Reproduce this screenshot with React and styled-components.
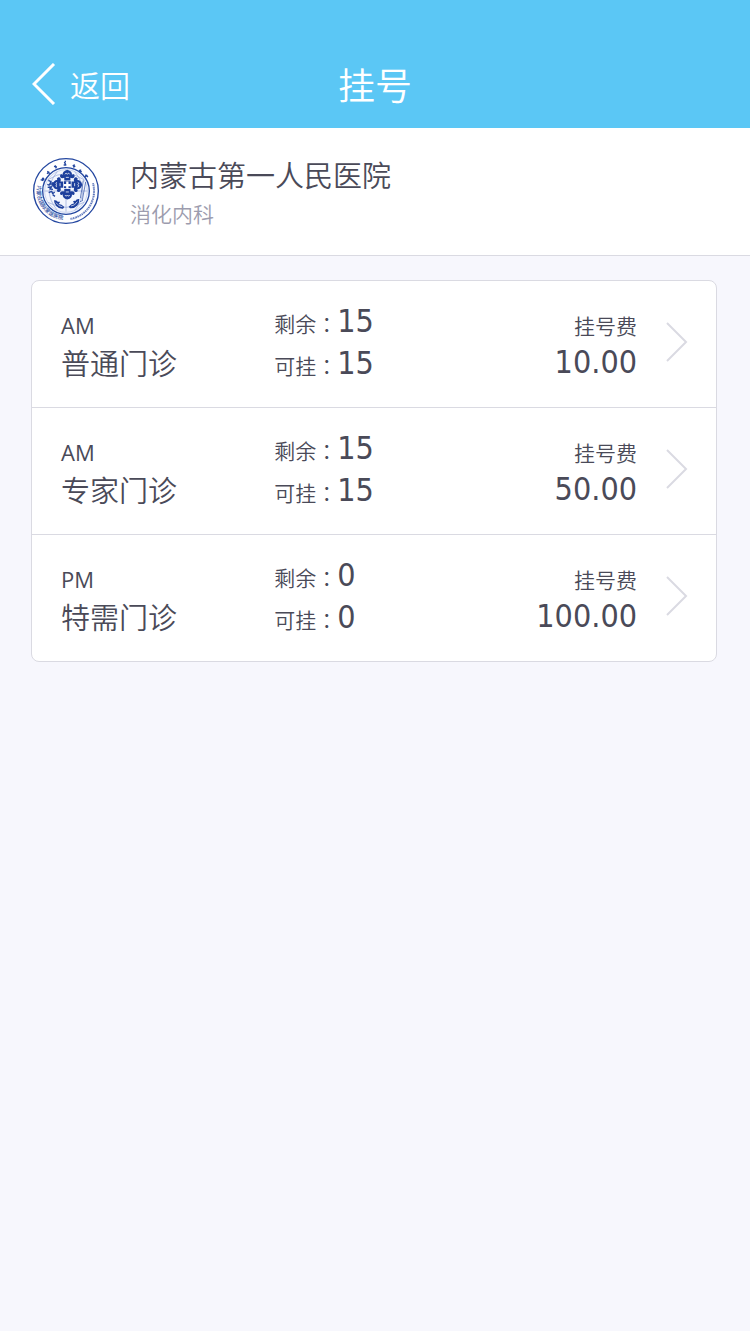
import React from "react";
import styled, { createGlobalStyle } from "styled-components";

const GlobalStyle = createGlobalStyle`
  *, *::before, *::after { box-sizing: border-box; }
  body {
    margin: 0;
    background: #f7f7fd;
    color: #4a4a58;
    font-family: "Noto Sans CJK SC", sans-serif;
    font-weight: 350;
  }
`;

const TopBar = styled.header`
  display: grid;
  grid-template-columns: 1fr auto 1fr;
  align-items: center;
  min-height: 128px;
  padding: 40px 32px 0;
  background: #5bc7f5;
  color: #fff;
`;

const BackLink = styled.a`
  display: flex;
  align-items: center;
  gap: 14px;
  justify-self: start;
  color: inherit;
  font-size: 30px;
  line-height: 44px;
  text-decoration: none;
`;

const PageTitle = styled.h1`
  margin: 0;
  font-size: 37px;
  font-weight: 350;
  line-height: 44px;
`;

const Hospital = styled.section`
  display: flex;
  align-items: center;
  gap: 30px;
  min-height: 128px;
  padding: 26px 32px 23px;
  background: #fff;
  border-bottom: 1px solid #dadae2;
`;

const SealImage = styled.svg`
  flex: none;
  margin-bottom: 4px;
`;

const HospitalName = styled.h2`
  margin: 0;
  font-size: 29px;
  font-weight: 350;
  line-height: 40px;
`;

const Department = styled.p`
  margin: 0;
  color: #9c9cae;
  font-size: 21px;
  line-height: 38px;
`;

const ClinicList = styled.ul`
  margin: 24px 33px 24px 31px;
  padding: 0;
  list-style: none;
  background: #fff;
  border: 1px solid #dadae2;
  border-radius: 8px;
`;

const ClinicItem = styled.li`
  & + & { border-top: 1px solid #dadae2; }
`;

const ClinicLink = styled.a`
  display: grid;
  grid-template-columns: 34% 1fr auto auto;
  align-items: center;
  min-height: 126px;
  padding: 0 28px 0 29px;
  color: inherit;
  text-decoration: none;
`;

const Column = styled.div`
  display: flex;
  flex-direction: column;
  text-align: ${(p) => p.$align || "left"};
`;

const Caption = styled.span`
  font-size: 21px;
  line-height: 36px;
`;

const Period = styled(Caption)`
  font-family: "Open Sans", "Noto Sans", sans-serif;
  font-size: 22px;
  font-weight: 400;
`;

const ClinicName = styled.span`
  font-size: 29px;
  line-height: 38px;
`;

const Quota = styled.span`
  font-size: 21px;
  line-height: 42px;
`;

const Colon = styled.span`
  font-family: "Noto Sans CJK TC", sans-serif;
`;

const Figure = styled.span`
  font-family: "DejaVu Sans Condensed", "Noto Sans CJK SC", sans-serif;
  font-size: 32px;
  font-weight: 400;
  line-height: 38px;
`;

const RowArrow = styled.svg`
  margin: 0 0 4px 29px;
`;

const clinics = [
  { period: "AM", name: "普通门诊", left: 15, open: 15, fee: "10.00" },
  { period: "AM", name: "专家门诊", left: 15, open: 15, fee: "50.00" },
  { period: "PM", name: "特需门诊", left: 0, open: 0, fee: "100.00" },
];

/* One arm of the cloud-pattern cross, pointing up from the centre. */
const CrossArm = ({ angle }) => (
  <g transform={`rotate(${angle} 124 103)`}>
    <path
      d="M116 92v-7c-7 3-12-1-11-6 1-4 6-4 7-1-1-7 3-11 12-14 9 3 13 7 12 14 1-3 6-3 7 1 1 5-4 9-11 6v7z"
      fill="#1d3f9c"
    />
    <path d="M118 76c1-4 5-3 6 0 1-3 5-4 6 0M120 84h8" fill="none" stroke="#fff" strokeWidth="2" />
  </g>
);

const Seal = () => (
  <SealImage width="68" height="68" viewBox="18 20 204 204" role="img" aria-label="医院院徽">
    <defs>
      <path id="seal-lower-arc" d="M35 103A86 86 0 0 0 118 208" />
    </defs>
    <circle cx="120" cy="122" r="97" fill="#fff" stroke="#2447a0" strokeWidth="4" />
    <circle cx="120" cy="122" r="70" fill="#f3f6fd" stroke="#2447a0" strokeWidth="4" />
    <circle cx="120" cy="122" r="64" fill="none" stroke="#7d95d2" strokeWidth="1" />
    <g fill="none" stroke="#91a5d8" strokeWidth="2">
      <path d="M66 88q54-36 108 0M56 122h128M66 156q54 30 108 0" />
      <path d="M94 64q-48 58 0 116M146 64q48 58 0 116M120 58v126" />
    </g>
    <g fill="none" stroke="#2447a0" strokeWidth="4">
      <path d="M48 83l7 5M44 88l8 3M53 82l-3 9M64 63l7 7M63 70l7-6M88 45l2 9M84 48l9 2M115 35l4 8M113 44h8M118 31v5M145 42l-2 10M140 45l8 4M165 58l-6 8M159 59l8 6M184 74l-8 6M178 73l8 7" />
    </g>
    <text fill="#2447a0" fontFamily="Noto Sans CJK SC, sans-serif" fontSize="16" fontWeight="500">
      <textPath href="#seal-lower-arc" startOffset="2">内蒙古国际蒙医医院</textPath>
    </text>
    <g fill="none" stroke="#5872b9">
      <path d="M201 99A85 85 0 0 1 132 206" strokeWidth="6" strokeDasharray="2 2 4 2 3 1" />
    </g>
    <g fill="none" stroke="#2447a0" strokeWidth="4" strokeLinejoin="round">
      <path d="M67 90l8 4-4 8 9-2-2 8M65 111l12-2-5 7 9 1M68 127l9-4 3 7 6-5M77 97l10 2M80 133l7 5M64 102l7 3" />
      <path d="M179 95l-10 54M172 90l-9 54M171 150l-9 4" strokeWidth="2" />
    </g>
    {/* The motif is enlarged about its own centre to fill the inner ring. */}
    <g transform="translate(124 103) scale(1.15) translate(-124 -103)">
      {[0, 90, 180, 270].map((a) => (
        <CrossArm key={a} angle={a} />
      ))}
      <path d="M115 94h18v18h-18z" fill="#1d3f9c" />
      <path d="M121 95h6v6h6v6h-6v6h-6v-6h-6v-6h6z" fill="#fff" />
    </g>
    <g fill="#1d3f9c">
      <path d="M84 150q8-2 12 5 4-3 6 1l-4 5q9 0 17 9l-4 5q-13 1-20-8-7-7-7-17z" />
      <path d="M160 146q-9-1-12 6-4-2-7 2l4 5q-9 1-17 10l4 5q13 1 21-8 8-8 7-20z" />
    </g>
    <path d="M90 157q8 12 19 12M154 154q-8 13-19 13" fill="none" stroke="#fff" strokeWidth="2" />
  </SealImage>
);

export default function App() {
  return (
    <>
      <GlobalStyle />
      <TopBar>
        <BackLink href="#back">
          <svg width="24" height="42" viewBox="0 0 24 42" fill="none" stroke="#fff" strokeWidth="3" aria-hidden="true">
            <path d="M22 1L2 21l20 20" />
          </svg>
          返回
        </BackLink>
        <PageTitle>挂号</PageTitle>
      </TopBar>
      <main>
        <Hospital>
          <Seal />
          <div>
            <HospitalName>内蒙古第一人民医院</HospitalName>
            <Department>消化内科</Department>
          </div>
        </Hospital>
        <ClinicList>
          {clinics.map((c, i) => (
            <ClinicItem key={c.name}>
              <ClinicLink href={`#clinic-${i + 1}`}>
                <Column>
                  <Period>{c.period}</Period>
                  <ClinicName>{c.name}</ClinicName>
                </Column>
                <Column>
                  <Quota>剩余<Colon>：</Colon><Figure>{c.left}</Figure></Quota>
                  <Quota>可挂<Colon>：</Colon><Figure>{c.open}</Figure></Quota>
                </Column>
                <Column $align="right">
                  <Caption>挂号费</Caption>
                  <Figure>{c.fee}</Figure>
                </Column>
                <RowArrow width="22" height="40" viewBox="0 0 22 40" fill="none" stroke="#dadae2" strokeWidth="2" aria-hidden="true">
                  <path d="M1 1l19 19L1 39" />
                </RowArrow>
              </ClinicLink>
            </ClinicItem>
          ))}
        </ClinicList>
      </main>
    </>
  );
}
